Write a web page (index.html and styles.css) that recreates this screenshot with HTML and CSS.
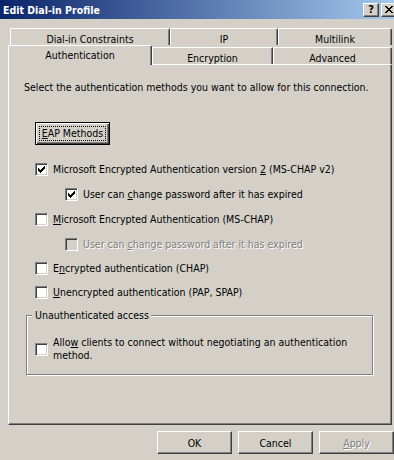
FILE: index.html
```html
<!DOCTYPE html>
<html lang="en">
<head>
    <meta charset="UTF-8">
    <title>Edit Dial-in Profile</title>
    <link rel="stylesheet" href="styles.css">
</head>
<body>
    <div class="window">
        <div class="titlebar">
            <span class="title">Edit Dial-in Profile</span>
            <div class="caption-btns">
                <span class="caption-btn">?</span>
                <span class="caption-btn">
                    <svg width="8" height="7" viewBox="0 0 8 7" shape-rendering="crispEdges">
                        <path d="M0 0h2v1h-2z M6 0h2v1h-2z M1 1h2v1h-2z M5 1h2v1h-2z M2 2h4v1h-4z M3 3h2v1h-2z M2 4h4v1h-4z M1 5h2v1h-2z M5 5h2v1h-2z M0 6h2v1h-2z M6 6h2v1h-2z" fill="#000"/>
                    </svg>
                </span>
            </div>
        </div>

        <div class="tabs">
            <div class="tab-row back">
                <div class="tab tab-dial">Dial-in Constraints</div>
                <div class="tab tab-ip">IP</div>
                <div class="tab tab-multi">Multilink</div>
            </div>
            <div class="tab-row front">
                <div class="tab tab-auth selected">Authentication</div>
                <div class="tab tab-enc">Encryption</div>
                <div class="tab tab-adv">Advanced</div>
            </div>
        </div>

        <div class="panel">
            <p class="intro">Select the authentication methods you want to allow for this connection.</p>

            <button class="btn default"><span class="focus"><u>E</u>AP Methods</span></button>

            <label class="check first">
                <span class="box"><svg class="tick" width="7" height="7" viewBox="0 0 7 7" shape-rendering="crispEdges"><path d="M6 0h1v1h-1z M5 1h2v1h-2z M0 2h1v1h-1z M4 2h3v1h-3z M0 3h2v1h-2z M3 3h3v1h-3z M0 4h5v1h-5z M1 5h3v1h-3z M2 6h1v1h-1z" fill="#000"/></svg></span>
                <span>Microsoft Encrypted Authentication version <u>2</u> (MS-CHAP v2)</span>
            </label>
            <label class="check sub">
                <span class="box"><svg class="tick" width="7" height="7" viewBox="0 0 7 7" shape-rendering="crispEdges"><path d="M6 0h1v1h-1z M5 1h2v1h-2z M0 2h1v1h-1z M4 2h3v1h-3z M0 3h2v1h-2z M3 3h3v1h-3z M0 4h5v1h-5z M1 5h3v1h-3z M2 6h1v1h-1z" fill="#000"/></svg></span>
                <span>User can <u>c</u>hange password after it has expired</span>
            </label>
            <label class="check">
                <span class="box"></span>
                <span><u>M</u>icrosoft Encrypted Authentication (MS-CHAP)</span>
            </label>
            <label class="check sub disabled">
                <span class="box"></span>
                <span>User can <u>c</u>hange password after it has expired</span>
            </label>
            <label class="check tight">
                <span class="box"></span>
                <span>E<u>n</u>crypted authentication (CHAP)</span>
            </label>
            <label class="check tight">
                <span class="box"></span>
                <span><u>U</u>nencrypted authentication (PAP, SPAP)</span>
            </label>

            <fieldset class="group">
                <legend>Unauthenticated access</legend>
                <label class="check multi">
                    <span class="box"></span>
                    <span class="wrap">Allo<u>w</u> clients to connect without negotiating an authentication method.</span>
                </label>
            </fieldset>
        </div>

        <div class="actions">
            <button class="btn">OK</button>
            <button class="btn">Cancel</button>
            <button class="btn" disabled><u>A</u>pply</button>
        </div>
    </div>
</body>
</html>
```

FILE: styles.css
```css
body {
    margin: 0;
    background-color: #d4d0c8;
    font-family: "DejaVu Sans Condensed", "DejaVu Sans", sans-serif;
    font-stretch: condensed;
    font-size: 10.5px;
    color: #000;
    overflow: hidden;
}

.window {
    width: 400px;
    height: 460px;
    background-color: #d4d0c8;
}

/* title bar */

.titlebar {
    height: 19px;
    display: flex;
    align-items: center;
    justify-content: space-between;
    padding: 0 3px 0 3px;
    background: linear-gradient(to right, #0a246a, #a6caf0);
}

.title {
    color: #fff;
    font-weight: bold;
}

.caption-btns {
    display: flex;
    gap: 2px;
}

.caption-btn {
    width: 16px;
    height: 14px;
    box-sizing: border-box;
    border: 1px solid;
    border-color: #fff #404040 #404040 #fff;
    box-shadow: inset -1px -1px #808080;
    background-color: #d4d0c8;
    display: flex;
    align-items: center;
    justify-content: center;
    font-weight: bold;
    font-size: 11px;
    line-height: 12px;
}

/* tabs */

.tabs {
    padding-top: 9px;
}

.tab-row {
    display: flex;
}

.back {
    margin-left: 10px;
    height: 17px;
}

.front {
    margin-left: 8px;
    height: 19px;
    align-items: flex-end;
}

.tab {
    box-sizing: border-box;
    height: 17px;
    border-top: 1px solid #fff;
    border-left: 1px solid #fff;
    border-right: 1px solid #404040;
    box-shadow: inset -1px 0 #808080;
    border-radius: 2px 2px 0 0;
    display: flex;
    justify-content: center;
    align-items: center;
    padding-top: 3px;
    background-color: #d4d0c8;
}

.tab-dial { width: 160px; }
.tab-ip { width: 108px; }
.tab-multi { width: 114px; }
.tab-auth { width: 144px; }
.tab-enc { width: 121px; }
.tab-adv { width: 119px; }

.tab.selected {
    height: 20px;
    margin-bottom: -1px;
    padding-top: 0;
    padding-bottom: 1px;
    position: relative;
    z-index: 1;
}

/* property page */

.panel {
    margin-left: 8px;
    width: 384px;
    height: 361px;
    box-sizing: border-box;
    border: 1px solid;
    border-color: #fff #404040 #404040 #fff;
    box-shadow: inset -1px -1px #808080;
    padding: 16px 0 0 15px;
}

.intro {
    margin: 0;
    line-height: 13px;
    white-space: nowrap;
}

.btn {
    width: 75px;
    height: 23px;
    box-sizing: border-box;
    padding: 0;
    border: 1px solid;
    border-color: #fff #404040 #404040 #fff;
    box-shadow: inset -1px -1px #808080;
    background-color: #d4d0c8;
    font: inherit;
    color: #000;
}

.btn:disabled {
    color: #808080;
    text-shadow: 1px 1px 0 #fff;
}

.btn.default {
    display: block;
    margin: 28px 0 0 11px;
    padding: 3px;
    border: 1px solid #000;
    box-shadow: inset 1px 1px #fff, inset -1px -1px #404040, inset -2px -2px #808080;
}

.focus {
    display: block;
    height: 15px;
    box-sizing: border-box;
    border: 1px dotted #000;
    line-height: 13px;
    text-align: center;
    white-space: nowrap;
}

/* check boxes */

.check {
    display: flex;
    align-items: center;
    gap: 5px;
    height: 13px;
    line-height: 13px;
    margin: 12px 0 0 11px;
    white-space: nowrap;
}

.check.first {
    margin-top: 18px;
}

.check.tight {
    margin-top: 11px;
}

.check.sub {
    margin-left: 41px;
}

.box {
    width: 13px;
    height: 13px;
    flex-shrink: 0;
    box-sizing: border-box;
    padding: 2px;
    border: 1px solid;
    border-color: #808080 #fff #fff #808080;
    box-shadow: inset 1px 1px #404040, inset -1px -1px #d4d0c8;
    background-color: #fff;
}

.tick {
    display: block;
}

.disabled {
    color: #808080;
    text-shadow: 1px 1px 0 #fff;
}

.disabled .box {
    background-color: #d4d0c8;
}

/* group box */

.group {
    margin: 10px 0 0 2px;
    padding: 0 0 0 5px;
    width: 347px;
    height: 66px;
    box-sizing: border-box;
    min-inline-size: 0;
    border: 1px solid #808080;
    box-shadow: inset 1px 1px #fff, 1px 1px #fff;
}

.group legend {
    padding: 0 2px 0 3px;
    line-height: 13px;
    background-color: #d4d0c8;
}

.check.multi {
    height: 28px;
    margin: 13px 0 0 3px;
    white-space: normal;
}

.wrap {
    width: 315px;
}

/* dialog buttons */

.actions {
    display: flex;
    justify-content: flex-end;
    gap: 6px;
    margin-top: 6px;
    padding-right: 6px;
}
```
